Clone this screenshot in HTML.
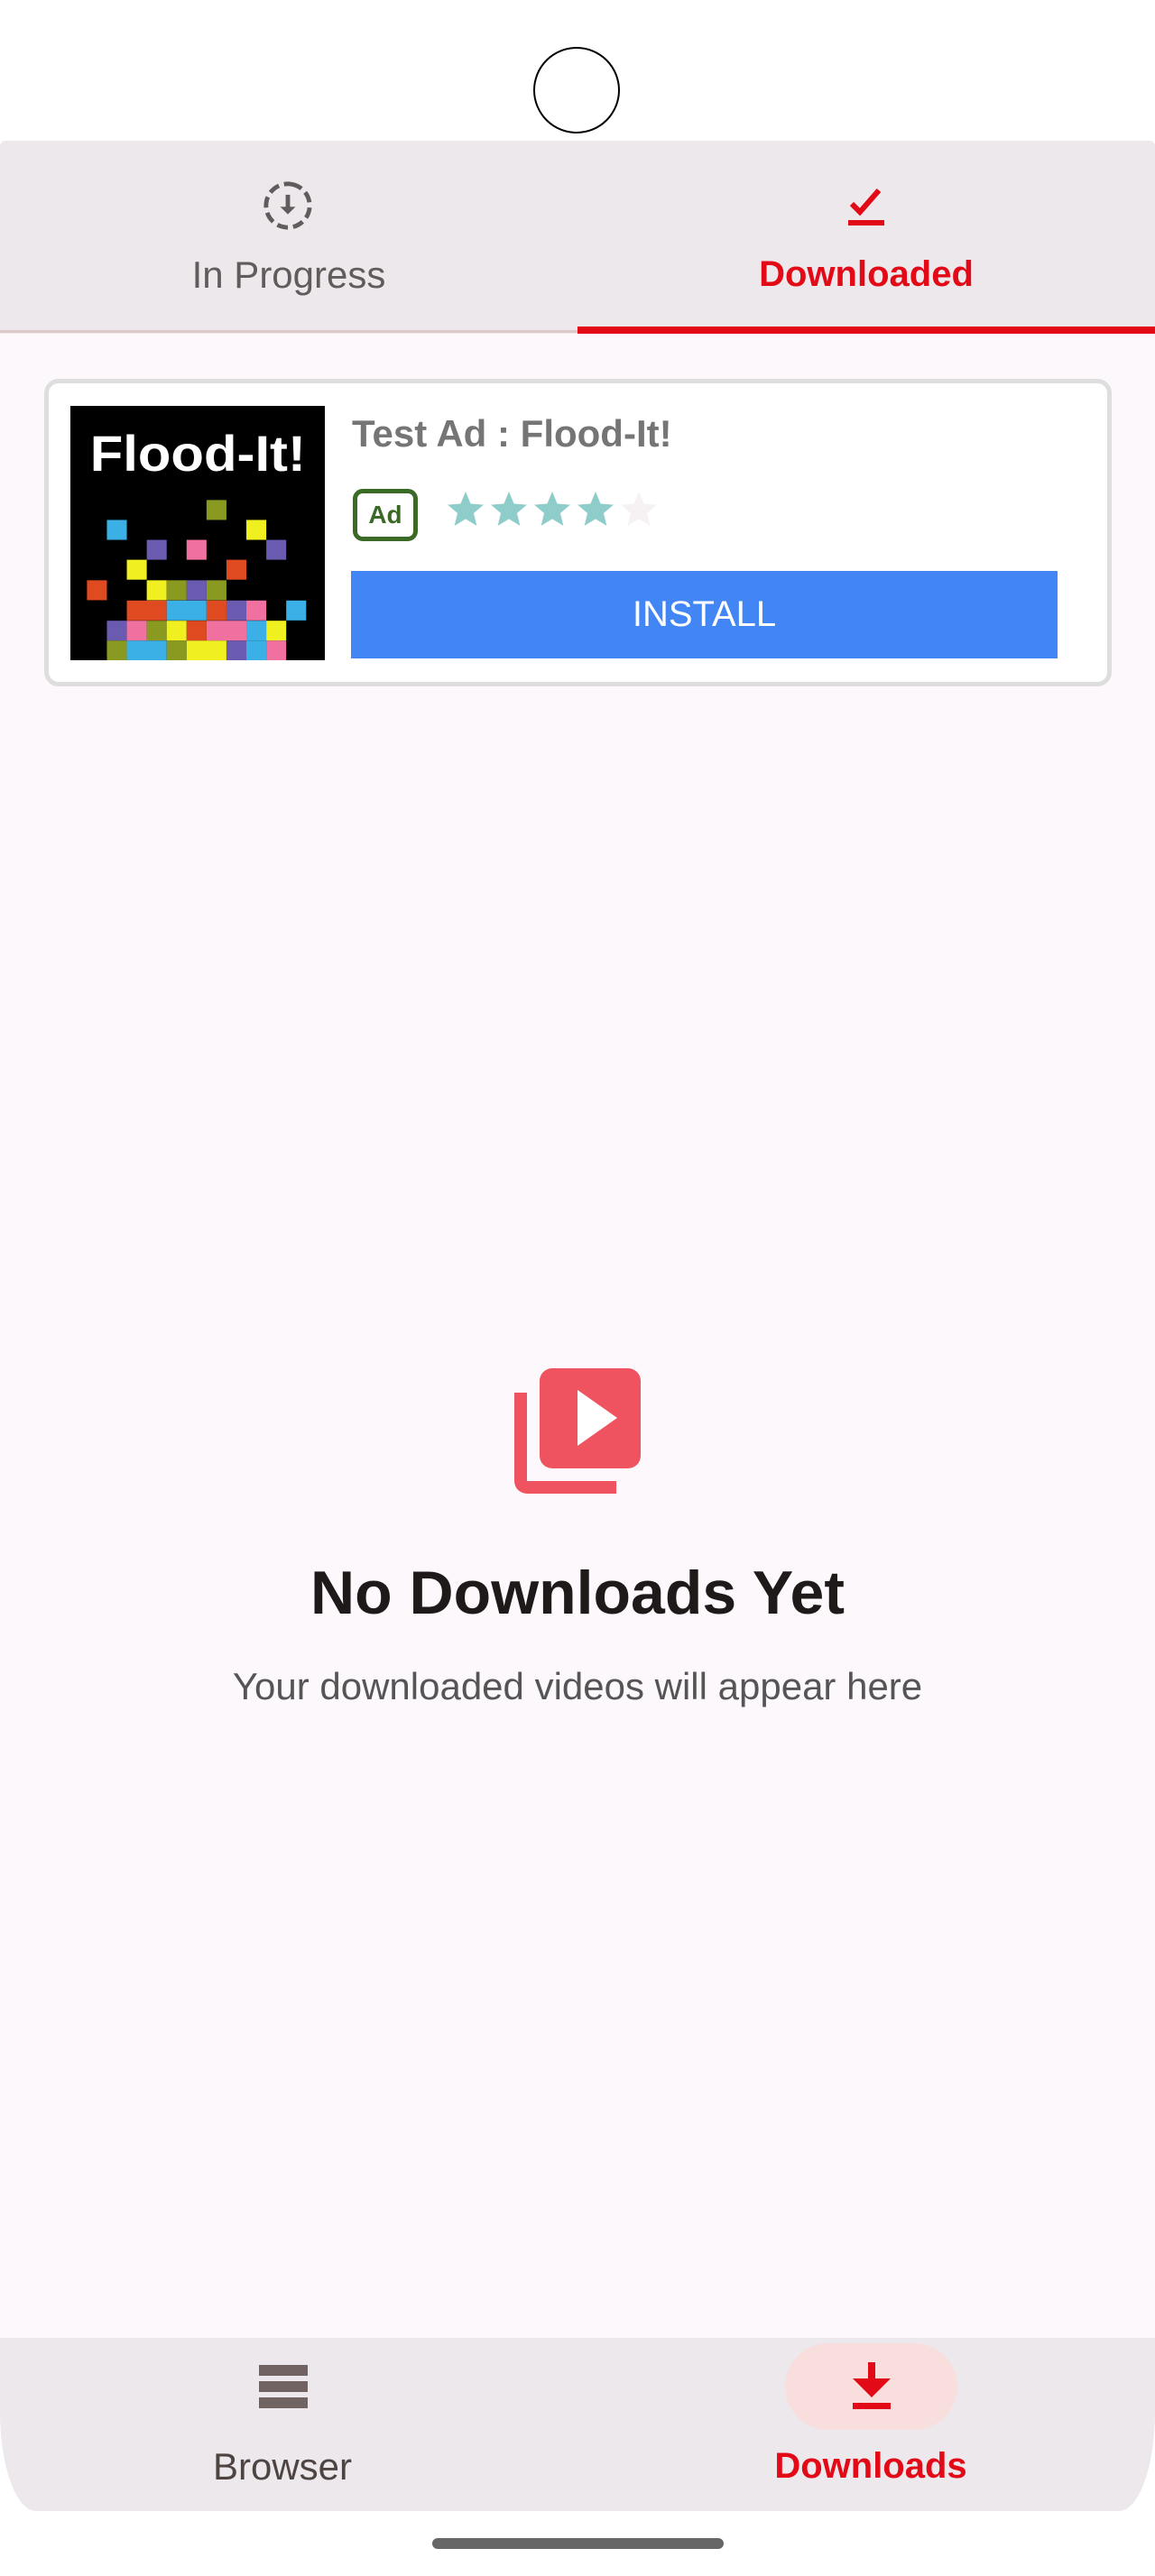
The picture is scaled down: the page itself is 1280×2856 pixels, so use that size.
<!DOCTYPE html>
<html><head><meta charset="utf-8">
<style>
*{margin:0;padding:0;box-sizing:border-box}
body{width:1280px;height:2856px;background:#fff;font-family:"Liberation Sans",sans-serif;position:relative;overflow:hidden}
.abs{position:absolute}
</style></head><body>
<div class="abs" style="left:0;top:370px;width:1280px;height:2222px;background:#FDF8FC"></div>
<div class="abs" style="left:591px;top:52px;width:96px;height:96px;border:2px solid #000;border-radius:50%;background:#fff"></div>

<!-- tab bar -->
<div class="abs" style="left:0;top:156px;width:1280px;height:214px;background:#ECE8EC;border-radius:6px 6px 0 0"></div>
<div class="abs" style="left:0;top:366px;width:640px;height:3px;background:#DCC8C8"></div>
<div class="abs" style="left:640px;top:362px;width:640px;height:8px;background:#E30A17"></div>
<svg class="abs" style="left:290px;top:199px" width="58" height="58" viewBox="0 0 24 24">
<circle cx="12" cy="12" r="10" fill="none" stroke="#625B5B" stroke-width="2" stroke-dasharray="5 2.4" transform="rotate(-80 12 12)"/>
<path d="M12 7v7" stroke="#625B5B" stroke-width="2"/><path d="M8.5 12.5L12 16l3.5-3.5z" fill="#625B5B"/>
</svg>
<div class="abs" style="left:0;top:281px;width:640px;text-align:center;font-size:42px;color:#625B5B">In Progress</div>
<svg class="abs" style="left:940px;top:206px" width="40" height="45" viewBox="0 0 40 45">
<path d="M4 20l9 9L34 5" fill="none" stroke="#E30A17" stroke-width="6"/>
<rect x="0" y="38" width="40" height="6" fill="#E30A17"/>
</svg>
<div class="abs" style="left:640px;top:282px;width:640px;text-align:center;font-size:40px;font-weight:bold;color:#E30A17">Downloaded</div>

<!-- ad card -->
<div class="abs" style="left:49px;top:420px;width:1183px;height:341px;border:5px solid #DEDEDE;border-radius:16px;background:#fff"></div>
<svg class="abs" style="left:78px;top:450px" width="282" height="282" viewBox="0 0 843 843">
<rect width="843" height="843" fill="#000"/>
<text x="65" y="215" font-family="Liberation Sans" font-weight="bold" font-size="165" fill="#fff" textLength="715" lengthAdjust="spacingAndGlyphs">Flood-It!</text>
<g>
<rect x="451" y="312" width="66" height="66" fill="#8a9a20"/>
<rect x="121" y="378" width="66" height="66" fill="#3bb0e6"/><rect x="583" y="378" width="66" height="66" fill="#f0f020"/>
<rect x="253" y="444" width="66" height="66" fill="#6a5ab0"/><rect x="385" y="444" width="66" height="66" fill="#f070a0"/><rect x="649" y="444" width="66" height="66" fill="#6a5ab0"/>
<rect x="187" y="510" width="66" height="66" fill="#f0f020"/><rect x="517" y="510" width="66" height="66" fill="#e04a20"/>
<rect x="55" y="578" width="66" height="66" fill="#e04a20"/><rect x="253" y="578" width="66" height="66" fill="#f0f020"/><rect x="319" y="578" width="66" height="66" fill="#8a9a20"/><rect x="385" y="578" width="66" height="66" fill="#6a5ab0"/><rect x="451" y="578" width="66" height="66" fill="#8a9a20"/>
<rect x="187" y="645" width="132" height="66" fill="#e04a20"/><rect x="319" y="645" width="132" height="66" fill="#3bb0e6"/><rect x="451" y="645" width="66" height="66" fill="#e04a20"/><rect x="517" y="645" width="66" height="66" fill="#6a5ab0"/><rect x="583" y="645" width="66" height="66" fill="#f070a0"/><rect x="715" y="645" width="66" height="66" fill="#3bb0e6"/>
<rect x="121" y="712" width="66" height="66" fill="#6a5ab0"/><rect x="187" y="712" width="66" height="66" fill="#f070a0"/><rect x="253" y="712" width="66" height="66" fill="#8a9a20"/><rect x="319" y="712" width="66" height="66" fill="#f0f020"/><rect x="385" y="712" width="66" height="66" fill="#e04a20"/><rect x="451" y="712" width="132" height="66" fill="#f070a0"/><rect x="583" y="712" width="66" height="66" fill="#3bb0e6"/><rect x="649" y="712" width="66" height="66" fill="#f0f020"/>
<rect x="121" y="778" width="66" height="66" fill="#8a9a20"/><rect x="187" y="778" width="132" height="66" fill="#3bb0e6"/><rect x="319" y="778" width="66" height="66" fill="#8a9a20"/><rect x="385" y="778" width="132" height="66" fill="#f0f020"/><rect x="517" y="778" width="66" height="66" fill="#6a5ab0"/><rect x="583" y="778" width="66" height="66" fill="#3bb0e6"/><rect x="649" y="778" width="66" height="66" fill="#f070a0"/>
</g>
</svg>
<div class="abs" style="left:390px;top:456px;font-size:42px;font-weight:bold;color:#757575;line-height:50px">Test Ad : Flood-It!</div>
<div class="abs" style="left:391px;top:542px;width:72px;height:58px;border:5px solid #3A6A25;border-radius:11px;color:#3A6A25;font-weight:bold;font-size:28px;text-align:center;line-height:48px">Ad</div>
<svg class="abs" style="left:496px;top:544px" width="240" height="42" viewBox="0 0 240 42">
<defs><path id="st" d="M20 1l5.6 13.5 14.4 1.1-11 9.4 3.4 14L20 31.4 7.6 39l3.4-14-11-9.4 14.4-1.1z"/></defs>
<use href="#st" x="0" fill="#8FCDCB"/><use href="#st" x="48" fill="#8FCDCB"/><use href="#st" x="96" fill="#8FCDCB"/><use href="#st" x="144" fill="#8FCDCB"/><use href="#st" x="192" fill="#F6F2F4"/>
</svg>
<div class="abs" style="left:389px;top:633px;width:783px;height:97px;background:#4285F4;color:#fff;font-size:40px;text-align:center;line-height:97px">INSTALL</div>

<!-- empty state -->
<svg class="abs" style="left:570px;top:1515px" width="142" height="142" viewBox="0 0 142 142">
<path d="M0 29h14v98h99v14H14A14 14 0 0 1 0 127z" fill="#EF5360"/>
<rect x="28" y="2" width="112" height="111" rx="14" fill="#EF5360"/>
<path d="M70 26L114 57 70 88z" fill="#fff"/>
</svg>
<div class="abs" style="left:0;top:1727px;width:1280px;text-align:center;font-size:68px;font-weight:bold;color:#1E1A1A">No Downloads Yet</div>
<div class="abs" style="left:0;top:1846px;width:1280px;text-align:center;font-size:42px;color:#555">Your downloaded videos will appear here</div>

<!-- bottom nav -->
<div class="abs" style="left:0;top:2592px;width:1280px;height:192px;background:#ECE8EC;border-radius:0 0 40px 40px/0 0 110px 110px"></div>
<div class="abs" style="left:287px;top:2622px;width:54px;height:12px;background:#706361"></div>
<div class="abs" style="left:287px;top:2640px;width:54px;height:12px;background:#706361"></div>
<div class="abs" style="left:287px;top:2658px;width:54px;height:12px;background:#706361"></div>
<div class="abs" style="left:0;top:2711px;width:626px;text-align:center;font-size:42px;color:#4E4442">Browser</div>
<div class="abs" style="left:870px;top:2598px;width:191px;height:96px;background:#F9DEDE;border-radius:48px"></div>
<svg class="abs" style="left:945px;top:2619px" width="42" height="52" viewBox="0 0 42 52">
<rect x="17" y="0" width="8" height="20" fill="#E30A17"/><path d="M0 18h42L21 39z" fill="#E30A17"/><rect x="0" y="45" width="42" height="7" fill="#E30A17"/>
</svg>
<div class="abs" style="left:640px;top:2712px;width:650px;text-align:center;font-size:40px;font-weight:bold;color:#E30A17">Downloads</div>
<div class="abs" style="left:479px;top:2814px;width:323px;height:12px;background:#666;border-radius:6px"></div>
</body></html>
